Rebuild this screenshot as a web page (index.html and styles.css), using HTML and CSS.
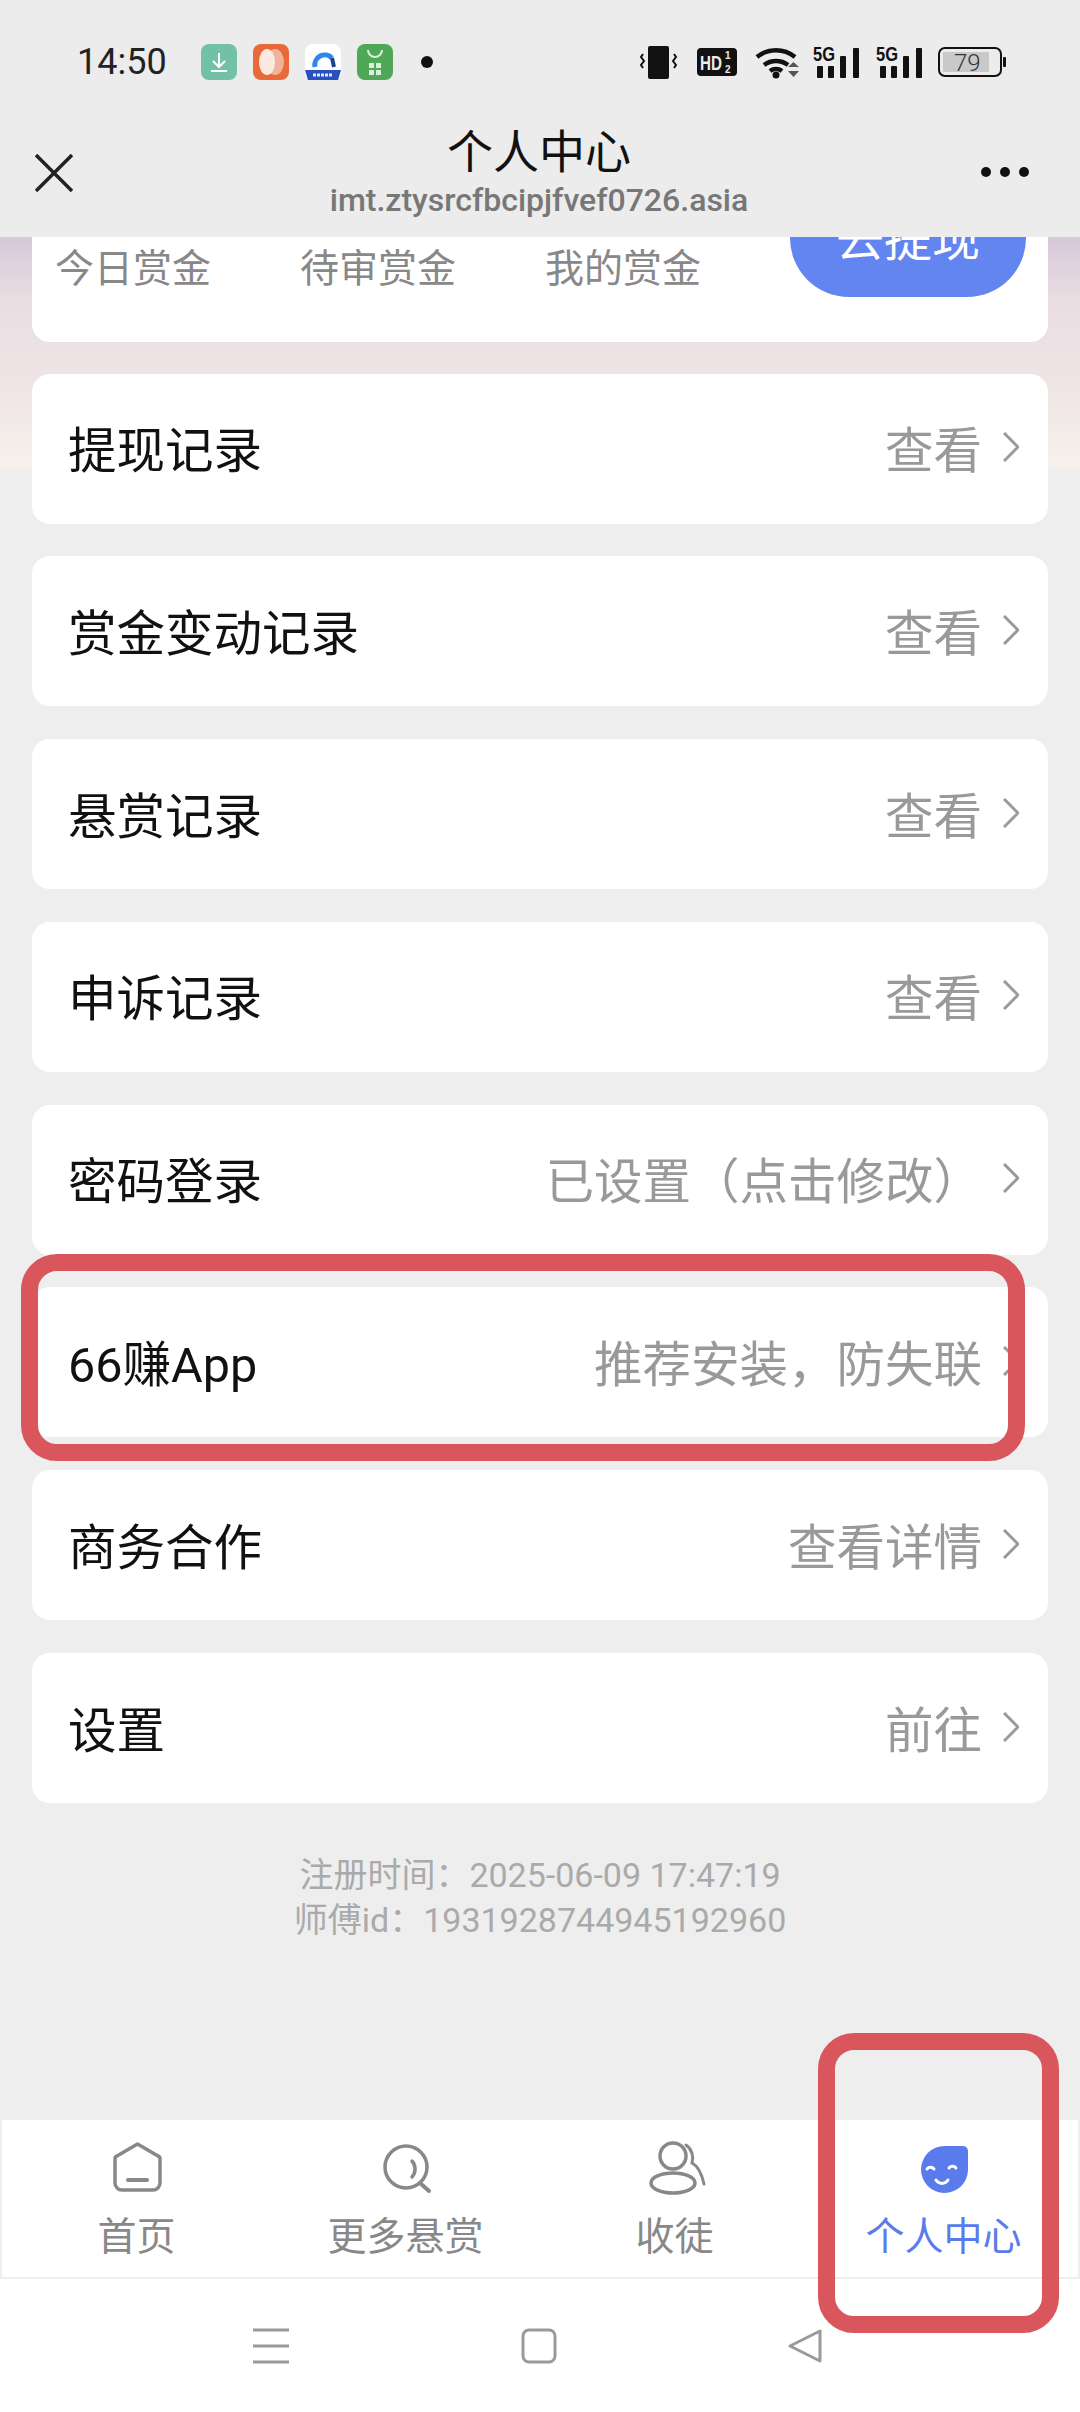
FILE: index.html
```html
<!doctype html>
<html>
<head>
<meta charset="utf-8">
<title>个人中心</title>
<link rel="stylesheet" href="styles.css">
</head>

<body>
<div class="page">
	<div class="top_box">
		<div class="status">
			<span class="time">14:50</span>
			<svg class="app" viewBox="0 0 36 36"><rect width="36" height="36" rx="8" fill="#72c0a5"/><path d="M18 9v14M12 17l6 6 6-6M10 27h16" fill="none" stroke="#fff" stroke-width="2"/></svg>
			<svg class="app" viewBox="0 0 36 36"><rect width="36" height="36" rx="8" fill="#e9693a"/><ellipse cx="22" cy="18" rx="9" ry="13" fill="#efb39b"/><ellipse cx="14" cy="18" rx="8" ry="13" fill="#fbe9df"/></svg>
			<svg class="app" viewBox="0 0 36 36"><rect width="36" height="36" rx="8" fill="#fff"/><path d="M10 23a10 10 0 0 1 17-9" fill="none" stroke="#2f86ea" stroke-width="5"/><path d="M27 14l2 9" stroke="#17468f" stroke-width="4"/><path d="M0 26h36l-3 10H3z" fill="#2a50c0"/><path d="M8 31h20" stroke="#dfe7ff" stroke-width="3" stroke-dasharray="3 1"/></svg>
			<svg class="app" viewBox="0 0 36 36"><rect width="36" height="36" rx="8" fill="#4fa857"/><path d="M11 6a7 7 0 0 0 14 0" fill="none" stroke="#d9f0da" stroke-width="2"/><path d="M12 19h5v5h-5zM19 19h5v5h-5zM12 26h5v5h-5zM19 26h5v5h-5z" fill="#d9f0da"/></svg>
			<i class="dot"></i>
			<div class="status_right">
				<svg class="ic_vib" viewBox="0 0 37 33"><rect x="8" width="21" height="33" rx="2" fill="#111"/><path d="M3 8l-2 3 3 4-3 4 2 3M34 8l2 3-3 4 3 4-2 3" fill="none" stroke="#111" stroke-width="2"/></svg>
				<svg class="ic_hd" viewBox="0 0 40 28"><rect width="40" height="28" rx="4" fill="#111"/><text transform="translate(3 22) scale(.76 1)" class="t_hd">HD</text><text x="28" y="11" class="t_sm">1</text><text x="28" y="25" class="t_sm">2</text></svg>
				<svg class="ic_wifi" viewBox="0 0 45 34"><path d="M2 12a30 30 0 0 1 38 0M9 20a20 20 0 0 1 24 0M15 26a10 10 0 0 1 12 0" fill="none" stroke="#111" stroke-width="4.5"/><circle cx="21" cy="30" r="3.5" fill="#111"/><path d="M33 22h11l-5.500-5zM33 26h11l-5.500 6z" fill="#555"/></svg>
				<svg class="ic_sig" viewBox="0 0 46 32"><text x="0" y="15" class="t_5g" textLength="22" lengthAdjust="spacingAndGlyphs">5G</text><rect x="4" y="20" width="6" height="12" rx="1" fill="#111"/><rect x="15" y="20" width="6" height="12" rx="1" fill="#111"/><rect x="27" y="10" width="6" height="22" rx="1" fill="#111"/><rect x="40" y="2" width="6" height="30" rx="1" fill="#111"/></svg>
				<svg class="ic_sig" viewBox="0 0 46 32"><text x="0" y="15" class="t_5g" textLength="22" lengthAdjust="spacingAndGlyphs">5G</text><rect x="4" y="20" width="6" height="12" rx="1" fill="#111"/><rect x="15" y="20" width="6" height="12" rx="1" fill="#111"/><rect x="27" y="10" width="6" height="22" rx="1" fill="#111"/><rect x="40" y="2" width="6" height="30" rx="1" fill="#111"/></svg>
				<svg class="ic_bat" viewBox="0 0 68 30"><rect x="1" y="1" width="62" height="28" rx="6" fill="none" stroke="#111" stroke-width="2"/><rect x="5" y="5" width="46" height="20" fill="#c9c9c9"/><rect x="65" y="10" width="3" height="10" rx="1" fill="#111"/><text x="16" y="24" class="t_bat">79</text></svg>
			</div>
		</div>
		<div class="title_bar">
			<svg class="close" viewBox="0 0 38 38"><path d="M1 1l36 36M37 1L1 37" stroke="#222" stroke-width="3.500"/></svg>
			<div class="title_txt">
				<h1>个人中心</h1>
				<p>imt.ztysrcfbcipjfvef0726.asia</p>
			</div>
			<div class="more"><i></i><i></i><i></i></div>
		</div>
	</div>

	<div class="scroll">
		<div class="summary">
			<div class="stat">今日赏金</div>
			<div class="stat">待审赏金</div>
			<div class="stat">我的赏金</div>
			<a href="javascript:;" class="cash">去提现</a>
		</div>
		<div class="row"><span>提现记录</span><em>查看</em><svg class="arrow" viewBox="0 0 16 30"><path d="M1 1l14 14L1 29"/></svg></div>
		<div class="row"><span>赏金变动记录</span><em>查看</em><svg class="arrow" viewBox="0 0 16 30"><path d="M1 1l14 14L1 29"/></svg></div>
		<div class="row"><span>悬赏记录</span><em>查看</em><svg class="arrow" viewBox="0 0 16 30"><path d="M1 1l14 14L1 29"/></svg></div>
		<div class="row"><span>申诉记录</span><em>查看</em><svg class="arrow" viewBox="0 0 16 30"><path d="M1 1l14 14L1 29"/></svg></div>
		<div class="row"><span>密码登录</span><em>已设置（点击修改）</em><svg class="arrow" viewBox="0 0 16 30"><path d="M1 1l14 14L1 29"/></svg></div>
		<div class="row"><span>66赚App</span><em>推荐安装，防失联</em><svg class="arrow" viewBox="0 0 16 30"><path d="M1 1l14 14L1 29"/></svg></div>
		<div class="row"><span>商务合作</span><em>查看详情</em><svg class="arrow" viewBox="0 0 16 30"><path d="M1 1l14 14L1 29"/></svg></div>
		<div class="row"><span>设置</span><em>前往</em><svg class="arrow" viewBox="0 0 16 30"><path d="M1 1l14 14L1 29"/></svg></div>
		<div class="reg_info">
			<p>注册时间：2025-06-09 17:47:19</p>
			<p>师傅id：1931928744945192960</p>
		</div>
	</div>

	<div class="tabs">
		<div class="tab">
			<svg viewBox="0 0 54 54"><path d="M27.500 3L48 15a3 3 0 0 1 2 3v24a7 7 0 0 1-7 7H12a7 7 0 0 1-7-7V18a3 3 0 0 1 2-3z" fill="none" stroke="#888" stroke-width="3.500" stroke-linejoin="round"/><path d="M18 39h19" stroke="#888" stroke-width="4" stroke-linecap="round"/></svg>
			<span>首页</span>
		</div>
		<div class="tab">
			<svg viewBox="0 0 54 54"><circle cx="27" cy="26" r="21" fill="none" stroke="#888" stroke-width="3.500"/><path d="M33 20a12 12 0 0 1 0 16" fill="none" stroke="#888" stroke-width="3.500" stroke-linecap="round"/><path d="M41 42l9 8" stroke="#888" stroke-width="4" stroke-linecap="round"/></svg>
			<span>更多悬赏</span>
		</div>
		<div class="tab">
			<svg viewBox="0 0 54 54"><circle cx="25" cy="15" r="13" fill="none" stroke="#888" stroke-width="3.500"/><ellipse cx="25" cy="42" rx="22" ry="10" fill="none" stroke="#888" stroke-width="3.500"/><path d="M38 4c6 4 8 12 6 18 6 3 10 12 12 21" fill="none" stroke="#888" stroke-width="3" stroke-linecap="round"/></svg>
			<span>收徒</span>
		</div>
		<div class="tab on">
			<svg viewBox="0 0 54 54"><path d="M27.500 5H46a5 5 0 0 1 5 5v19A23.500 23.500 0 1 1 27.500 5z" fill="#5a7bec"/><path d="M10 28a4.500 4.500 0 0 1 7 0M32 27a4.500 4.500 0 0 1 7 0M19 39a7 7 0 0 0 12 0" fill="none" stroke="#fff" stroke-width="3" stroke-linecap="round"/></svg>
			<span>个人中心</span>
		</div>
	</div>

	<div class="sys_nav">
		<svg class="nav_menu" viewBox="0 0 36 36"><path d="M0 2h36M0 18h36M0 34h36" stroke="#999" stroke-width="3"/></svg>
		<svg class="nav_home" viewBox="0 0 36 36"><rect x="2" y="2" width="32" height="32" rx="6" fill="none" stroke="#999" stroke-width="3"/></svg>
		<svg class="nav_back" viewBox="0 0 36 36"><path d="M33 3v30L3 18z" fill="none" stroke="#999" stroke-width="3" stroke-linejoin="round"/></svg>
	</div>

	<div class="mark mark_row"></div>
	<div class="mark mark_tab"></div>
</div>
</body>
</html>
```

FILE: styles.css
```css
*{margin:0; padding:0; box-sizing:border-box;}
html,body{width:1080px; height:2412px; overflow:hidden;}
body{font-family:Roboto,"Noto Sans CJK SC",sans-serif; background:#fff;}
.page{width:1080px; height:2412px; position:relative; display:flex; flex-direction:column; overflow:hidden;}

.top_box{height:237px; background:#ececec; flex:none; position:relative; z-index:2;}
.status{height:124px; padding:0 74px 0 77px; display:flex; align-items:center;}
.time{font-size:36px; color:#222; width:124px;}
.app{width:36px; height:36px; margin-right:16px;}
.dot{width:12px; height:12px; border-radius:50%; background:#111; margin-left:12px;}
.status_right{margin-left:auto; display:flex; align-items:center;}
.status_right svg{overflow:visible;}
.ic_vib{width:37px; height:33px; margin-right:20px;}
.ic_hd{width:40px; height:28px; margin-right:18px;}
.ic_wifi{width:45px; height:34px; margin-right:13px;}
.ic_sig{width:46px; height:32px; margin-right:17px;}
.ic_bat{width:68px; height:30px; margin-left:-1px;}
.t_hd{font:bold 20px "Liberation Sans",sans-serif; fill:#ececec;}
.t_sm{font:bold 10px "Liberation Sans",sans-serif; fill:#ececec;}
.t_5g{font:bold 21px "Liberation Sans",sans-serif; fill:#111;}
.t_bat{font:300 24px Roboto,sans-serif; fill:#333;}

.title_bar{height:113px; padding:0 51px 0 35px; display:flex; align-items:flex-start;}
.close{width:38px; height:38px; margin-top:30px; flex:none;}
.title_txt{flex:1; text-align:center; padding-left:24px;}
.title_txt h1{font-size:46px; font-weight:400; line-height:56px; color:#111;}
.title_txt p{font-size:32px; font-weight:500; line-height:40px; color:#777;}
.more{width:48px; display:flex; justify-content:space-between; margin-top:43px; flex:none;}
.more i{width:10px; height:10px; border-radius:50%; background:#111;}

.scroll{flex:1; overflow:hidden; padding:0 32px; background:#eee linear-gradient(#d7c8da 0,#e9dde2 63px,#f0e6e6 160px,#f6f1ec 226px,#eee 237px,#eee 100%) no-repeat; background-size:100% 237px;}
.summary{height:205px; margin-top:-100px; margin-bottom:31.500px; background:#fff; border-radius:18px; padding:0 22px 45px 23px; display:flex; align-items:flex-end;}
.stat{width:245px; font-size:39px; line-height:48px; color:#888; padding-bottom:4px;}
.cash{width:236px; height:118px; line-height:122px; border-radius:59px; background:#6385f0; color:#fff; font-size:48px; text-align:center; text-decoration:none; flex:none;}

.row{height:150px; margin-bottom:32.800px; background:#fff; border-radius:18px; padding:0 29px 3px 36px; display:flex; align-items:center; font-size:48.500px; color:#111;}
.row span{flex:1;}
.row em{font-style:normal; color:#999;}
.arrow{width:16px; height:30px; margin-left:21px; flex:none;}
.arrow path{fill:none; stroke:#999; stroke-width:3;}

.reg_info{text-align:center; font-size:34px; line-height:45px; color:#aaa; margin-top:50px;}

.tabs{height:159px; flex:none; background:#fff; border:solid #eee; border-width:0 2px 2px; display:grid; grid-template-columns:repeat(4,269px); padding-top:21px;}
.tab{display:flex; flex-direction:column; align-items:center; font-size:39px; line-height:46px; color:#888;}
.tab svg{width:54px; height:54px; margin-bottom:19px; overflow:visible;}
.tab.on{color:#5a7bec;}

.sys_nav{height:133px; flex:none; background:#fff; position:relative;}
.sys_nav svg{width:36px; height:36px; position:absolute; top:49px;}
.nav_menu{left:253px;}
.nav_home{left:521px;}
.nav_back{left:787px;}

.mark{position:absolute; border:17px solid #d9575c; border-radius:36px; z-index:3;}
.mark_row{left:21px; top:1254px; width:1004px; height:207px;}
.mark_tab{left:818px; top:2033px; width:241px; height:300px;}
```
